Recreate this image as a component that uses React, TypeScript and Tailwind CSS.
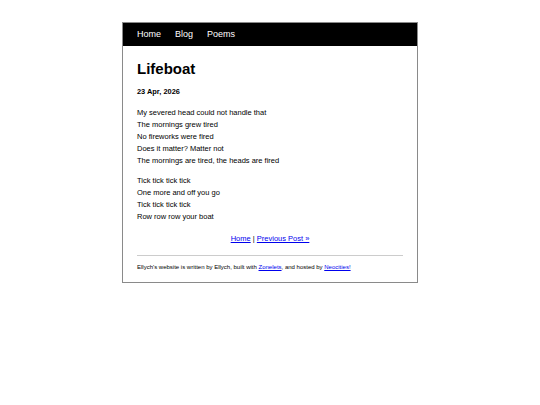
import React from "react";

const stanzas = [
  [
    "My severed head could not handle that",
    "The mornings grew tired",
    "No fireworks were fired",
    "Does it matter? Matter not",
    "The mornings are tired, the heads are fired",
  ],
  ["Tick tick tick tick", "One more and off you go", "Tick tick tick tick", "Row row row your boat"],
];

export default function App() {
  return (
    <div className="min-h-[405px] bg-white pt-[22px] font-['Liberation_Sans',Arial,sans-serif] text-black">
      <div className="mx-auto w-[296px] border border-[#8a8a8a]">
        <nav className="flex h-[23px] items-center gap-[14px] bg-black px-[14px] text-[9px] leading-none text-white">
          <a className="text-white">Home</a>
          <a className="text-white">Blog</a>
          <a className="text-white">Poems</a>
        </nav>

        <main className="px-[14px] pt-[14px] pb-[11px]">
          <h1 className="text-[15px] font-bold leading-[18px]">Lifeboat</h1>
          <div className="mt-[8px] text-[7.4px] font-bold leading-[12px]">23 Apr, 2026</div>

          <div className="mt-[9px] text-[7.5px] leading-[12px]">
            {stanzas.map((lines, i) => (
              <p key={i} className={i > 0 ? "mt-[8px]" : ""}>
                {lines.map((l) => (
                  <span key={l} className="block">
                    {l}
                  </span>
                ))}
              </p>
            ))}
          </div>

          <div className="mt-[10px] text-center text-[7.5px] leading-[12px]">
            <a href="#" className="text-[#0000ee] underline">Home</a> |{" "}
            <a href="#" className="text-[#0000ee] underline">Previous Post »</a>
          </div>

          <hr className="mt-[10px] border-0 border-t border-[#cccccc]" />

          <footer className="mt-[7px] text-[6px] leading-[8px]">
            Ellych's website is written by Ellych, built with{" "}
            <a href="#" className="text-[#0000ee] underline">Zonelets</a>, and hosted by{" "}
            <a href="#" className="text-[#0000ee] underline">Neocities!</a>
          </footer>
        </main>
      </div>
    </div>
  );
}
